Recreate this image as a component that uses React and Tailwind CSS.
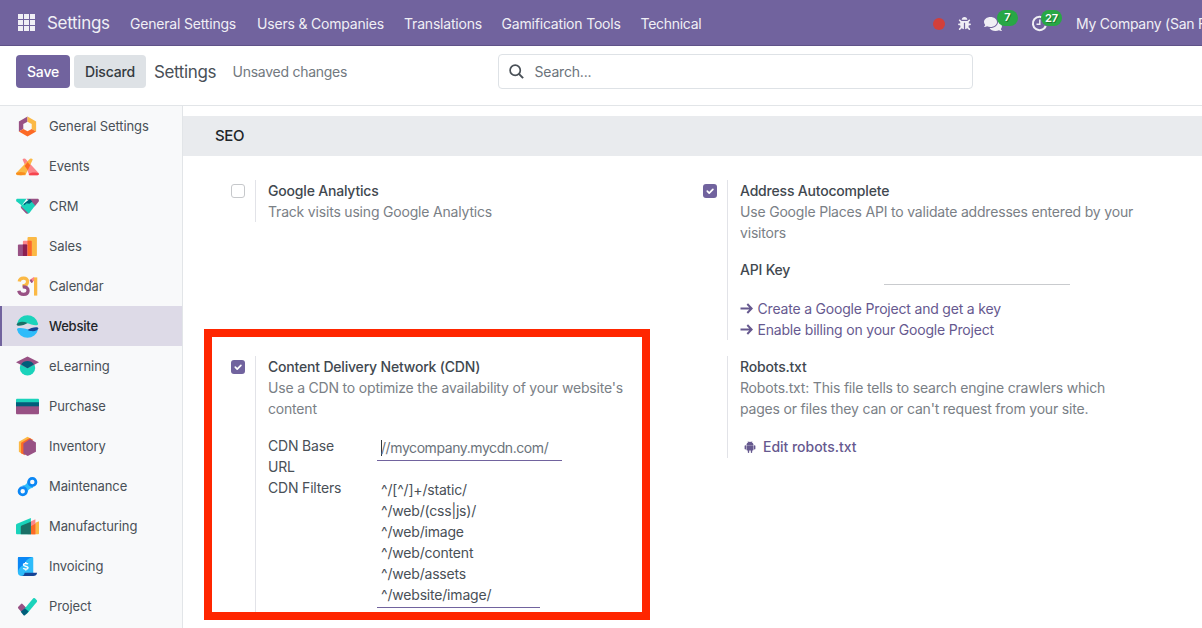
import React from "react";
import { FaBug, FaComments } from "react-icons/fa";

const icons = {
  general: (
    <>
      <path d="M12 1.5 3 6.8v10.4l4.6-2.6V9.4L12 7z" fill="#985184" />
      <path d="M12 1.5l9 5.3v10.4l-4.6-2.6V9.4L12 7z" fill="#fbb945" />
      <path d="M3 17.2 12 22.4l9-5.2-4.6-2.7L12 17l-4.4-2.5z" fill="#fc6a25" />
    </>
  ),
  events: (
    <>
      <path d="M6.8 4.800C7.600 3.300 9.700 3.300 10.500 4.800L23.600 18.800c.8 1.200 0 2.200-1.200 2.200H14z" fill="#fc868b" />
      <path d="M17.500 4.800c-.8-1.500-2.900-1.500-3.700 0L.4 18.500c-.8 1.300 0 2.500 1.200 2.500h8.200z" fill="#fbb945" />
      <path d="M12.100 7.300 14.900 10.600 12.300 16 9 11.400z" fill="#fc6a25" />
      <ellipse cx="5" cy="19.400" rx="5" ry="1.700" fill="#f98d1e" />
      <path d="M13.200 20.200c1.500-2.400 7.800-2.700 10.500-.9.500.9-.2 1.700-1.200 1.700H14z" fill="#f6454f" />
    </>
  ),
  crm: (
    <>
      <path d="M1.500 4h9.500L6 11 .6 6.800C-.5 5.500.3 4 1.500 4z" fill="#1ad3bb" />
      <path d="M22.500 4H11l8.500 8 4-5c1-1.500.2-3-1-3z" fill="#985184" />
      <path d="M5 11.500 14 4.500l6 6.500-5.800 7.500c-1.200 1.200-2.400 1.200-3.600 0z" fill="#1ad3bb" />
      <path d="M8 9.500 14.500 4.300l2.500 2.500-3 2.200-3-.4-2.200 2z" fill="#005e7a" />
      <path d="M5 11.500 12.800 19c-1 .8-2 .5-3-.5l-4.600-5z" fill="#985184" />
    </>
  ),
  sales: (
    <>
      <rect x="12" y="2" width="9.800" height="20" rx="1" fill="#fbb945" />
      <rect x="7.200" y="6" width="9.200" height="16" rx="1" fill="#fc868b" />
      <path d="M12 6h3.600q.8 0 .8.800V22H12z" fill="#fc6a25" />
      <rect x="2" y="10" width="9.600" height="12" rx="1" fill="#985184" />
      <path d="M7.200 10H11q.600 0 .600.600V22H7.200z" fill="#8c1f50" />
    </>
  ),
  calendar: (
    <g fill="none" strokeWidth="3.400">
      <path d="M3.300 6.800C4.200 1.800 12.300 2 12 7c-.1 3-2.500 4.200-5.200 4.200" stroke="#fbb945" />
      <path d="M7 12.300c3.800-.2 5.800 1.600 5.600 4.300-.4 5-8.800 5-9.700-.2" stroke="#985184" />
      <path d="M15 6.600 19.500 3.600" stroke="#fc868b" />
      <path d="M20.500 2.500V21.500" stroke="#fbb945" />
      <path d="M15.200 7 17 5.800" stroke="#985184" />
    </g>
  ),
  website: (
    <>
      <path d="M1 9A11.300 11.300 0 0 1 23 9c.3 2.400-4 1.800-7 .8C10 7.400 6 8.400 1 9z" fill="#1ad3bb" />
      <path d="M1 15A11.300 11.300 0 0 0 23 15c-6 2-9 .6-13-.7-3.500-1-9-1.500-9 .7z" fill="#2ebcfa" />
      <path d="M.6 9.800C2 6.500 8 6.400 12 8.300 9 10.500.8 12.700.6 9.800z" fill="#1a6f66" />
      <path d="M23.400 14.200C22 17.500 16 17.600 12 15.700c3-2.200 11.200-4.400 11.400-1.500z" fill="#144496" />
    </>
  ),
  elearning: (
    <>
      <circle cx="12" cy="13.500" r="8" fill="#1ad3bb" />
      <path d="M12 1.600 24 7.600 12 13.800 0 7.600z" fill="#985184" />
      <path d="M5.300 9.700C8 5 16 5 18.700 9.700L12 13.900z" fill="#005e7a" />
    </>
  ),
  purchase: (
    <>
      <path d="M1 4h22q1 0 1 1v3H0V5q0-1 1-1z" fill="#1ad3bb" />
      <path d="M0 11.500h24V19q0 1-1 1H1q-1 0-1-1z" fill="#985184" />
      <path d="M0 7.500h24v4.300H0z" fill="#005e7a" />
    </>
  ),
  inventory: (
    <>
      <path d="M3 7 12 1.800l4 2L6.500 9.300v10.500L3 17.600z" fill="#fbb945" />
      <path d="M5.300 8.200 14.200 3l4 2.200-9 5.500v10.500l-3.900-2.200z" fill="#fc6a25" />
      <path d="M14.700 4.300 20.800 7.700v9.800L12.300 22 7.700 19.500V8.800z" fill="#985184" />
    </>
  ),
  maintenance: (
    <>
      <path d="M6.500 11c3.600-.2 5-2.200 5.500-4.600l6 6.800c-3.600.2-5.500 2-6 5z" fill="#2ebcfa" />
      <circle cx="7" cy="17" r="3.800" fill="#f8f9fa" stroke="#0b87f5" strokeWidth="2.900" />
      <circle cx="17" cy="7.300" r="3.800" fill="#f8f9fa" stroke="#0b87f5" strokeWidth="2.900" />
    </>
  ),
  manufacturing: (
    <>
      <path d="M17 9.300 24 6.600V19.300q0 .8-.8.800H17z" fill="#fbb945" />
      <path d="M12 8.300 20.200 4.500V20.100H12z" fill="#fc868b" />
      <path d="M15 12 20.200 9V20.100H15z" fill="#fc6a25" />
      <path d="M0 10.500Q0 9.500 1 9L15.500 3V20.100H1q-1 0-1-1z" fill="#1ad3bb" />
      <path d="M5 12.500Q5 11.500 6 11L15.500 7V20.100H5z" fill="#1a6f66" />
    </>
  ),
  invoicing: (
    <>
      <path d="M3 2h14q1 0 1 1v19H6q-4 0-4-4V3q0-1 1-1z" fill="#2ebcfa" />
      <path d="M3 2h14Q9 5 9 10 3 12 2 18V3q0-1 1-1z" fill="#0b87f5" />
      <path d="M9 18.600h13q-.5 3.400-4 3.400H5.500q3 0 3.500-3.400z" fill="#144496" />
      <path d="M12.500 9.600c-.6-1-4.600-1.300-4.700.6-.1 2.100 4.900 1 4.800 3.200-.1 2-4.100 1.700-5 .3M10.200 7.300v1.300M10.200 14.800v1.400" fill="none" stroke="#fff" strokeWidth="1.500" />
    </>
  ),
  project: (
    <>
      <path d="M2.400 12.200 5.200 9.300q.8-.7 1.600 0l6.200 6.400-4.600 4.800-6-6.500q-.8-.9 0-1.800z" fill="#985184" />
      <path d="m8 15.500 10-12q.8-.8 1.700 0l2 2q.7.800 0 1.700L11 20z" fill="#1ad3bb" />
      <path d="m9.300 13.800 3.900 3.300-3.800 3.900q-.8.600-1.500 0l-3-3.400z" fill="#005e7a" />
    </>
  ),
};

const apps = [
  ["general", "General Settings"],
  ["events", "Events"],
  ["crm", "CRM"],
  ["sales", "Sales"],
  ["calendar", "Calendar"],
  ["website", "Website"],
  ["elearning", "eLearning"],
  ["purchase", "Purchase"],
  ["inventory", "Inventory"],
  ["maintenance", "Maintenance"],
  ["manufacturing", "Manufacturing"],
  ["invoicing", "Invoicing"],
  ["project", "Project"],
];

function Navbar() {
  return (
    <header className="flex h-[46px] shrink-0 items-center overflow-hidden border-b border-[#5f5288] bg-[#71639e] pt-[2px] text-[#f0eff5]">
      <svg className="mb-[2px] ml-[18px] mr-[12px] size-[17px] shrink-0" viewBox="0 0 17 17" fill="currentColor">
        {[0, 6, 12].map((y) => [0, 6, 12].map((x) => <rect key={`${x}-${y}`} x={x} y={y} width="5" height="5" />))}
      </svg>
      <span className="w-[83px] shrink-0 text-[17px] tracking-[-0.300px]">Settings</span>
      <nav className="flex shrink-0">
        <a className="w-[127px]">General Settings</a>
        <a className="w-[147px]">Users &amp; Companies</a>
        <a className="w-[97.500px]">Translations</a>
        <a className="w-[139px]">Gamification Tools</a>
        <a className="tracking-[-0.280px]">Technical</a>
      </nav>
      <div className="ml-auto flex shrink-0 items-center">
        <span className="size-3 rounded-full bg-[#d23f3a]" />
        <FaBug className="ml-[13px] size-[13px]" />
        <span className="relative ml-[13px]">
          <FaComments className="size-[18px]" />
          <b className="absolute left-[13px] top-[-5px] flex h-4 w-[21px] items-center justify-center rounded-full bg-[#28a745] text-[11px] font-semibold tracking-normal text-white [text-shadow:1px_1px_0_rgba(0,0,0,0.3)]">7</b>
        </span>
        <span className="relative ml-[29px]">
          <svg className="size-[17px]" viewBox="0 0 17 17" fill="none" stroke="currentColor" strokeWidth="2.100">
            <path d="M13.600 4A6.700 6.700 0 1 0 14.800 11" />
            <path d="M8.800 4.500V9.200H5.500" strokeWidth="1.400" />
          </svg>
          <b className="absolute left-[10px] top-[-5px] flex h-4 w-[21px] items-center justify-center rounded-full bg-[#28a745] text-[11px] font-semibold tracking-normal text-white [text-shadow:1px_1px_0_rgba(0,0,0,0.3)]">27</b>
        </span>
        <span className="ml-7 w-[126px] whitespace-nowrap tracking-[-0.250px]">My Company (San Francisco)</span>
      </div>
    </header>
  );
}

function ControlPanel() {
  return (
    <div className="flex h-[60px] shrink-0 items-start border-b border-[#e2e5e8] pl-4 pt-2">
      <button className="mt-[1px] h-[33px] w-[54px] rounded bg-[#71639e] font-medium text-white">Save</button>
      <button className="ml-1 mt-[1px] h-[33px] w-[72px] rounded bg-[#dee2e6] font-medium text-[#343a40]">Discard</button>
      <span className="ml-2 w-[78.500px] text-[17px] leading-[37px] tracking-[-0.380px]">Settings</span>
      <span className="w-[265px] leading-[35px] tracking-[-0.260px] text-[#727980]">Unsaved changes</span>
      <div className="flex h-[35px] w-[475px] items-center rounded border border-[#dee2e6] pl-[10px] text-[#6b737b]">
        <svg className="mr-[11px] size-[15px] text-[#495057]" viewBox="0 0 15 15" fill="none" stroke="currentColor" strokeWidth="1.700">
          <circle cx="6.200" cy="6.200" r="5.100" />
          <path d="m9.900 9.900 4.200 4.200" strokeWidth="2" />
        </svg>
        Search...
      </div>
    </div>
  );
}

function Sidebar() {
  return (
    <aside className="w-[183px] shrink-0 border-r border-[#e2e5e8] bg-[#f8f9fa] text-[13px] tracking-[-0.100px]">
      {apps.map(([icon, label]) => (
        <div
          key={icon}
          className={
            icon === "website"
              ? "flex h-10 items-center border-l-[2px] border-[#71639e] bg-[#dddae7] pl-[14px] font-medium tracking-[-0.200px] text-[#212529]"
              : "flex h-10 items-center pl-4"
          }
        >
          <svg className="mr-[10px] size-[23px]" viewBox="0 0 24 24">{icons[icon]}</svg>
          {label}
        </div>
      ))}
    </aside>
  );
}

function Checkbox({ checked }) {
  return checked ? (
    <span className="flex size-[14px] items-center justify-center rounded-[3px] bg-[#71639e]">
      <svg className="size-[14px]" viewBox="0 0 14 14" fill="none" stroke="#fff" strokeWidth="1.700" strokeLinecap="round" strokeLinejoin="round">
        <path d="m4.300 7.200 1.900 1.900 3.700-3.800" />
      </svg>
    </span>
  ) : (
    <span className="block size-[14px] rounded-[3px] border border-[#c6c8cb] bg-white" />
  );
}

function Setting({ checked, title, description, className, children }) {
  return (
    <section className={`flex ${className}`}>
      <div className="w-[24.500px] shrink-0 pt-[3.500px]">{checked !== undefined && <Checkbox checked={checked} />}</div>
      <div className="min-w-0 flex-1 border-l border-[#e2e3e8] pl-3">
        <h3 className="font-medium text-[#41484f]">{title}</h3>
        <p className="text-[#7a8086]">{description}</p>
        {children}
      </div>
    </section>
  );
}

function Arrow() {
  return (
    <svg className="mr-[4.500px] h-[11px] w-[13px]" viewBox="0 0 13 11" fill="none" stroke="currentColor" strokeWidth="2">
      <path d="M.5 5.500h11M7.300 1l4.400 4.500L7.300 10" />
    </svg>
  );
}

function Android() {
  return (
    <svg className="mr-[7px] size-[12px]" viewBox="0 0 12 12" fill="currentColor">
      <path d="M2.500 3.900C2.600 2.500 3.300 1.700 4.200 1.200L3.700.2l.3-.2.600 1Q6 .5 7.400 1L8 0l.3.200-.5 1c.9.5 1.600 1.300 1.700 2.700z" />
      <path d="M2.500 4.300h7v4.500q0 .8-.8.800H8.200v1.600q0 .8-.7.800t-.7-.8V9.600H5.200v1.600q0 .8-.7.800t-.7-.8V9.600H3.300q-.8 0-.8-.8z" />
      <rect x=".6" y="4.200" width="1.500" height="4.400" rx=".75" />
      <rect x="9.900" y="4.200" width="1.500" height="4.400" rx=".75" />
    </svg>
  );
}

function SettingsPage() {
  return (
    <main className="min-w-0 flex-1 pt-[10px]">
      <h2 className="flex h-10 items-center bg-[#e9ebee] pb-[2px] pl-8 text-[15px] font-medium tracking-[-0.400px] text-[#212529]">SEO</h2>
      <div className="grid grid-cols-[472px_472px] grid-rows-[160px_257px] gap-y-4 pl-[47.500px] pt-6">
        <Setting checked={false} title="Google Analytics" description="Track visits using Google Analytics" className="h-[42px] w-[420px]" />
        <Setting
          checked
          title="Address Autocomplete"
          description="Use Google Places API to validate addresses entered by your visitors"
          className="w-[440px]"
        >
          <div className="mt-4 flex h-[26px]">
            <span className="w-[144px] font-medium text-[#41484f]">API Key</span>
            <span className="w-[186px] border-b border-[#c9cbce]" />
          </div>
          <div className="mt-[13px] text-[#66598f]">
            <a className="flex items-center"><Arrow />Create a Google Project and get a key</a>
            <a className="flex items-center"><Arrow />Enable billing on your Google Project</a>
          </div>
        </Setting>
        <Setting
          checked
          title="Content Delivery Network (CDN)"
          description="Use a CDN to optimize the availability of your website's content"
          className="w-[406px]"
        >
          <div className="mt-4 flex">
            <div className="w-[109px]">
              <div className="w-20">CDN Base URL</div>
              <div>CDN Filters</div>
            </div>
            <div>
              <div className="flex h-[26px] w-[185px] items-center border-b border-[#71639e] pl-1 tracking-[-0.420px] text-[#6b737b]">
                <span className="-mr-px h-4 w-px bg-[#343a40]" />
                //mycompany.mycdn.com/
              </div>
              <div className="mt-[18px] h-[129px] w-[163px] whitespace-pre-line border-b border-[#71639e] pl-1">
                {"^/[^/]+/static/\n^/web/(css|js)/\n^/web/image\n^/web/content\n^/web/assets\n^/website/image/"}
              </div>
            </div>
          </div>
        </Setting>
        <Setting
          title="Robots.txt"
          description="Robots.txt: This file tells to search engine crawlers which pages or files they can or can't request from your site."
          className="h-[102px] w-[410px]"
        >
          <a className="mt-[17px] flex items-center pl-1 font-medium tracking-[-0.030px] text-[#66598f]">
            <Android />
            Edit robots.txt
          </a>
        </Setting>
      </div>
    </main>
  );
}

export default function App() {
  return (
    <div className="relative flex h-[628px] w-[1202px] flex-col overflow-hidden bg-white font-[Inter,sans-serif] text-[14px] leading-[21px] tracking-[-0.190px] text-[#495057]">
      <Navbar />
      <ControlPanel />
      <div className="flex min-h-0 flex-1 overflow-hidden">
        <Sidebar />
        <SettingsPage />
      </div>
      <div className="absolute left-[204px] top-[329px] h-[291px] w-[446px] border-8 border-[#ff2600]" />
    </div>
  );
}
